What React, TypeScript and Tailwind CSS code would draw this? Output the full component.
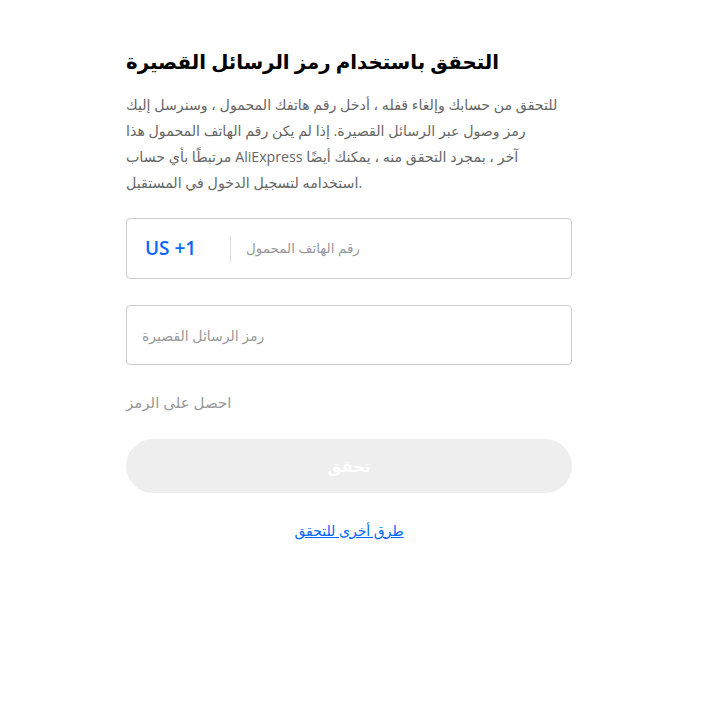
const font = {
  fontFamily: '"Open Sans", "DejaVu Sans", sans-serif',
};

export default function App() {
  return (
    <div className="min-h-[726px] bg-white" style={font}>
      <div className="ml-[126px] w-[446px] pt-[44px]" dir="ltr">
        <h1 className="whitespace-nowrap text-[19.8px] font-bold leading-[36px] text-black">
          التحقق باستخدام رمز الرسائل القصيرة
        </h1>
        <p className="mt-[12px] pr-[8px] text-[14.2px] leading-[26px] text-[#666]">
          للتحقق من حسابك وإلغاء قفله ، أدخل رقم هاتفك المحمول ، وسنرسل إليك رمز وصول عبر الرسائل القصيرة. إذا لم يكن رقم الهاتف المحمول هذا مرتبطًا بأي حساب AliExpress آخر ، بمجرد التحقق منه ، يمكنك أيضًا استخدامه لتسجيل الدخول في المستقبل.
        </p>

        <div className="mt-[22px] flex h-[61px] items-center rounded-[4px] border border-[#ccc]">
          <span className="w-[103px] pl-[18px] text-[19px] font-semibold text-[#0a66ff]">
            US +1
          </span>
          <span className="h-[26px] w-px bg-[#ddd]" />
          <span className="pl-[15px] text-[13.5px] text-[#999]">
            رقم الهاتف المحمول
          </span>
        </div>

        <div className="mt-[26px] flex h-[60px] items-center rounded-[4px] border border-[#ccc] px-[15px]">
          <span className="text-[14px] text-[#999]">رمز الرسائل القصيرة</span>
        </div>

        <div className="mt-[26px] text-[15px] text-[#999]">احصل على الرمز</div>

        <button className="mt-[25px] flex h-[54px] w-full items-center justify-center rounded-full bg-[#eee] text-[16px] font-bold text-white">
          تحقق
        </button>

        <div className="mt-[25px] text-center">
          <a href="#" className="text-[14px] text-[#0066ff] underline">
            طرق أخرى للتحقق
          </a>
        </div>
      </div>
    </div>
  );
}
